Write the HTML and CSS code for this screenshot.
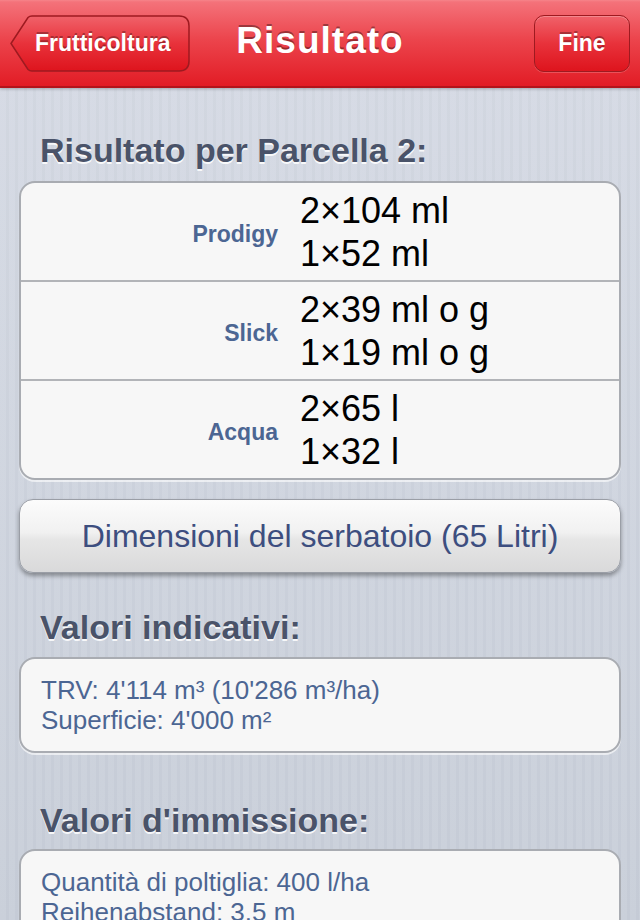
FILE: index.html
```html
<!DOCTYPE html>
<html lang="it">
<head>
    <meta charset="UTF-8">
    <meta name="viewport" content="width=device-width, initial-scale=1.0">
    <title>Risultato</title>
    <link rel="stylesheet" href="styles.css">
</head>
<body>

    <header class="navbar">
        <a href="#" class="back-btn">
            <svg class="back-shape" width="180" height="57" viewBox="0 0 180 57">
                <defs>
                    <linearGradient id="backFill" x1="0" y1="0" x2="0" y2="1">
                        <stop offset="0" stop-color="#f0626a"/>
                        <stop offset="0.5" stop-color="#e8323b"/>
                        <stop offset="1" stop-color="#de141d"/>
                    </linearGradient>
                </defs>
                <path d="M1 28.5 L18 2.5 Q19.5 1 22 1 H169 Q179 1 179 11 V46 Q179 56 169 56 H22 Q19.5 56 18 54.5 Z"
                      fill="url(#backFill)" stroke="#9e1a20" stroke-width="1.5"/>
            </svg>
            <span>Frutticoltura</span>
        </a>
        <h1 class="nav-title">Risultato</h1>
        <a href="#" class="nav-btn">Fine</a>
    </header>

    <main class="content">
        <h2 class="section-title first">Risultato per Parcella 2:</h2>
        <div class="group">
            <div class="row">
                <div class="row-label">Prodigy</div>
                <div class="row-value">2×104 ml<br>1×52 ml</div>
            </div>
            <div class="row">
                <div class="row-label">Slick</div>
                <div class="row-value">2×39 ml o g<br>1×19 ml o g</div>
            </div>
            <div class="row">
                <div class="row-label">Acqua</div>
                <div class="row-value">2×65 l<br>1×32 l</div>
            </div>
        </div>

        <button class="tank-btn">Dimensioni del serbatoio (65 Litri)</button>

        <h2 class="section-title">Valori indicativi:</h2>
        <div class="group note">
            TRV: 4'114 m³ (10'286 m³/ha)<br>
            Superficie: 4'000 m²
        </div>

        <h2 class="section-title spaced">Valori d'immissione:</h2>
        <div class="group note">
            Quantità di poltiglia: 400 l/ha<br>
            Reihenabstand: 3.5 m
        </div>
    </main>

</body>
</html>
```

FILE: styles.css
```css
body {
    margin: 0;
    height: 920px;
    overflow: hidden;
    font-family: "Liberation Sans", Arial, sans-serif;
    background-color: #cdd2dd;
    background-image:
        repeating-linear-gradient(90deg, rgba(255,255,255,0.04) 0 6px, rgba(0,0,0,0.015) 6px 9px),
        linear-gradient(#d6dbe5, #c8ced9);
}

.navbar {
    display: grid;
    grid-template-columns: 1fr auto 1fr;
    align-items: center;
    height: 86px;
    padding: 0 10px;
    background: linear-gradient(#f6848a 0, #f4727a 2px, #ec454d 45%, #e21c25 100%);
    border-bottom: 2px solid #b3141b;
    box-shadow: 0 1px 3px rgba(0, 0, 0, 0.25);
}

.back-btn {
    position: relative;
    justify-self: start;
    display: flex;
    align-items: center;
    width: 180px;
    height: 57px;
    padding-left: 25px;
    box-sizing: border-box;
    color: white;
    text-decoration: none;
    font-weight: bold;
    font-size: 23px;
    text-shadow: 0 -2px 0 rgba(0, 0, 0, 0.3);
}

.back-shape {
    position: absolute;
    left: 0;
    top: 0;
}

.back-btn span {
    position: relative;
}

.nav-title {
    margin: 0 0 4px;
    color: white;
    font-size: 37px;
    letter-spacing: 1px;
    text-shadow: 0 -2px 0 rgba(0, 0, 0, 0.35);
}

.nav-btn {
    justify-self: end;
    display: flex;
    align-items: center;
    justify-content: center;
    width: 96px;
    height: 57px;
    box-sizing: border-box;
    border: 1.5px solid #9e1a20;
    border-radius: 10px;
    background: linear-gradient(#f0626a, #e8323b 50%, #de141d);
    box-shadow: inset 0 1px 0 rgba(255, 255, 255, 0.25), 0 1px 0 rgba(255, 255, 255, 0.2);
    color: white;
    text-decoration: none;
    font-weight: bold;
    font-size: 23px;
    text-shadow: 0 -2px 0 rgba(0, 0, 0, 0.3);
}

.content {
    padding: 0 19px;
}

.section-title {
    margin: 34px 0 10px 21px;
    font-size: 34px;
    line-height: 40px;
    color: #4a5369;
    text-shadow: 0 2px 0 rgba(255, 255, 255, 0.85);
}

.section-title.first {
    margin: 42px 0 11px 21px;
}

.section-title.spaced {
    margin: 47px 0 9px 21px;
}

.group {
    background: #f7f7f7;
    border: 2px solid #a9acb2;
    border-radius: 16px;
    box-shadow: 0 2px 0 rgba(255, 255, 255, 0.6);
}

.row {
    display: flex;
    align-items: center;
    height: 97px;
}

.row + .row {
    border-top: 2px solid #b2b4b8;
}

.row-label {
    width: 257px;
    padding-top: 5px;
    text-align: right;
    font-weight: bold;
    font-size: 23px;
    color: #4c6693;
}

.row-value {
    margin-left: 22px;
    font-size: 36px;
    line-height: 43px;
    color: #000;
}

.tank-btn {
    display: block;
    width: 100%;
    height: 74px;
    margin-top: 19px;
    border: 1px solid #9a9ea6;
    border-radius: 14px;
    background: linear-gradient(#fcfcfc, #f1f1f1 45%, #e6e6e6 55%, #d9d9da);
    box-shadow: 0 3px 4px rgba(0, 0, 0, 0.35);
    font-family: "Liberation Sans", Arial, sans-serif;
    font-size: 32px;
    color: #3d4e7f;
    cursor: pointer;
}

.note {
    padding: 16px 20px;
    font-size: 26px;
    line-height: 30px;
    color: #4c6693;
}
```
